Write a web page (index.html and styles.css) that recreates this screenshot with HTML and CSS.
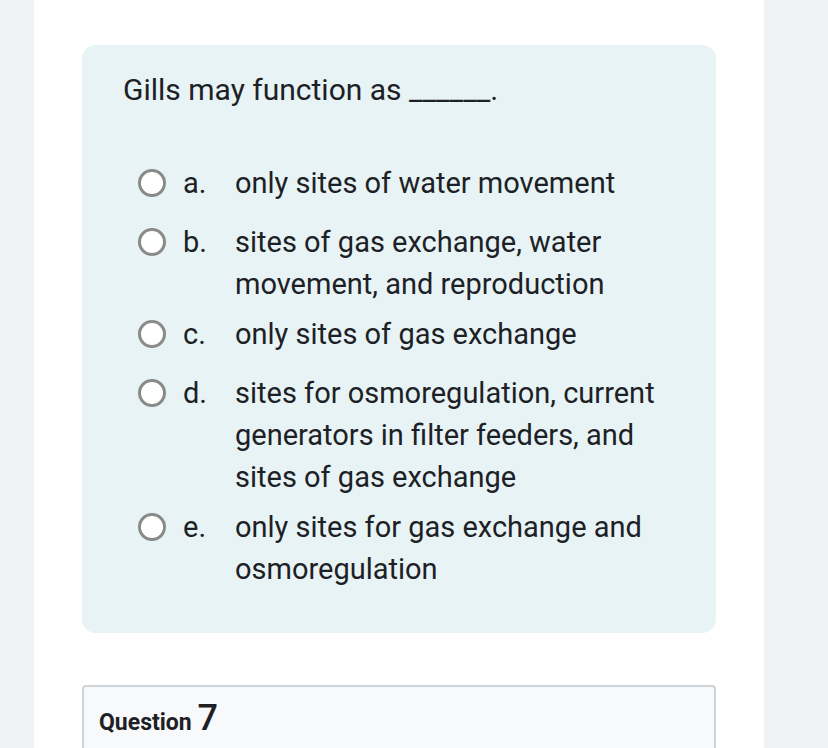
FILE: index.html
```html
<!DOCTYPE html>
<html>
<head>
<meta charset="utf-8">
<link rel="stylesheet" href="styles.css">
</head>
<body>
<div class="page">
  <div class="content">
    <div class="formulation">
      <div class="qtext">Gills may function as ______.</div>
      <div class="answers">
        <div class="opt"><span class="radio"></span><span class="letter">a.</span><span class="text">only sites of water movement</span></div>
        <div class="opt"><span class="radio"></span><span class="letter">b.</span><span class="text">sites of gas exchange, water movement, and reproduction</span></div>
        <div class="opt"><span class="radio"></span><span class="letter">c.</span><span class="text">only sites of gas exchange</span></div>
        <div class="opt"><span class="radio"></span><span class="letter">d.</span><span class="text">sites for osmoregulation, current generators in filter feeders, and sites of gas exchange</span></div>
        <div class="opt"><span class="radio"></span><span class="letter">e.</span><span class="text">only sites for gas exchange and osmoregulation</span></div>
      </div>
    </div>
    <div class="info">
      <h3 class="qno">Question <span class="num">7</span></h3>
    </div>
  </div>
</div>
</body>
</html>
```
FILE: styles.css
```css
html, body {
  margin: 0;
  padding: 0;
  background: #f0f2f5;
  font-family: Roboto, "Liberation Sans", sans-serif;
  color: #1d2125;
}
.page {
  display: flex;
  padding-left: 34px;
  padding-right: 64px;
  height: 748px;
  overflow: hidden;
}
.content {
  background: #ffffff;
  flex: 1;
  padding: 45px 48px 0 48px;
}
.formulation {
  background: #e7f3f5;
  border-radius: 14px;
  padding: 28px 40px 35px 41px;
}
.qtext {
  font-size: 30px;
  line-height: 34px;
  margin-bottom: 55px;
}
.answers {
  display: flex;
  flex-direction: column;
}
.opt {
  display: flex;
  align-items: flex-start;
  min-height: 51px;
  padding-bottom: 8px;
  font-size: 29px;
  line-height: 42px;
}
.radio {
  flex: none;
  width: 22px;
  height: 22px;
  border: 3px solid #8a8a8a;
  border-radius: 50%;
  background: #fff;
  margin: 7px 17px 0 15px;
}
.letter {
  flex: none;
  width: 52px;
}
.text {
  flex: 1;
}
.info {
  margin-top: 52px;
  background: #f8f9fa;
  border: 2px solid #cfd4d9;
  border-bottom: none;
  border-radius: 4px 4px 0 0;
  height: 80px;
  padding: 0 15px;
}
.qno {
  margin: 11px 0 0 0;
  font-size: 23px;
  font-weight: 700;
  line-height: 40px;
}
.num {
  font-size: 36px;
  font-weight: 500;
}
```
